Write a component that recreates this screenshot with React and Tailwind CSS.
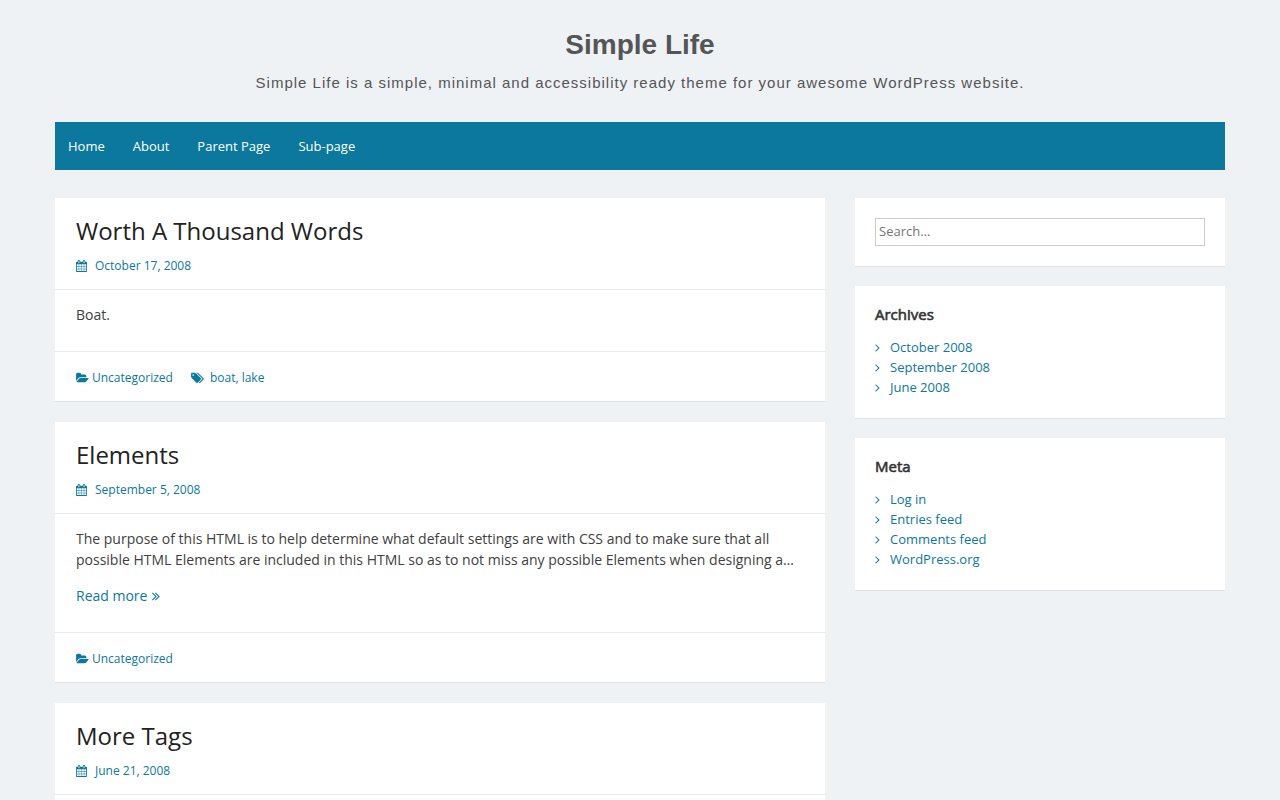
const ICONS = {
  calendar: {
    width: 1664,
    path: "M128 1664h288v-288h-288v288zm352 0h320v-288h-320v288zm-352-352h288v-320h-288v320zm352 0h320v-320h-320v320zm-352-384h288v-288h-288v288zm736 736h320v-288h-320v288zm-384-736h320v-288h-320v288zm768 736h288v-288h-288v288zm-384-352h320v-320h-320v320zm-352-864v-288q0-13-9.500-22.500t-22.500-9.500h-64q-13 0-22.500 9.500t-9.500 22.500v288q0 13 9.500 22.500t22.500 9.500h64q13 0 22.500-9.500t9.500-22.500zm736 864h288v-320h-288v320zm-384-384h320v-288h-320v288zm384 0h288v-288h-288v288zm32-480v-288q0-13-9.500-22.500t-22.500-9.500h-64q-13 0-22.500 9.500t-9.500 22.500v288q0 13 9.500 22.500t22.500 9.500h64q13 0 22.500-9.500t9.500-22.500zm384-64v1280q0 52-38 90t-90 38h-1408q-52 0-90-38t-38-90v-1280q0-52 38-90t90-38h128v-96q0-66 47-113t113-47h64q66 0 113 47t47 113v96h384v-96q0-66 47-113t113-47h64q66 0 113 47t47 113v96h128q52 0 90 38t38 90z",
  },
  folder: {
    width: 1920,
    path: "M1879 952q0 31-31 66l-336 396q-43 51-120.500 86.500t-143.500 35.500h-1088q-34 0-60.500-13t-26.500-43q0-31 31-66l336-396q43-51 120.500-86.500t143.500-35.500h1088q34 0 60.500 13t26.500 43zm-343-344v160h-832q-94 0-197 47.500t-164 119.500l-337 396-5 6q0-4-.5-12.500t-.5-12.500v-960q0-92 66-158t158-66h320q92 0 158 66t66 158v32h544q92 0 158 66t66 158z",
  },
  tags: {
    width: 1920,
    path: "M448 448q0-53-37.500-90.500t-90.500-37.500-90.500 37.500-37.500 90.500 37.500 90.500 90.500 37.500 90.500-37.500 37.500-90.500zm1067 576q0 53-37 90l-491 492q-39 37-91 37-53 0-90-37l-715-716q-38-37-64.500-101t-26.500-117v-416q0-52 38-90t90-38h416q53 0 117 26.500t102 64.500l715 714q37 39 37 91zm384 0q0 53-37 90l-491 492q-39 37-91 37-36 0-59-14t-53-45l470-470q37-37 37-90 0-52-37-91l-715-714q-38-38-102-64.500t-117-26.500h224q53 0 117 26.500t102 64.500l715 714q37 39 37 91z",
  },
  angle: {
    width: 640,
    path: "M595 960q0 13-10 23l-466 466q-10 10-23 10t-23-10l-50-50q-10-10-10-23t10-23l393-393-393-393q-10-10-10-23t10-23l50-50q10-10 23-10t23 10l466 466q10 10 10 23z",
  },
  doubleAngle: {
    width: 1024,
    path: "M595 960q0 13-10 23l-466 466q-10 10-23 10t-23-10l-50-50q-10-10-10-23t10-23l393-393-393-393q-10-10-10-23t10-23l50-50q10-10 23-10t23 10l466 466q10 10 10 23zm384 0q0 13-10 23l-466 466q-10 10-23 10t-23-10l-50-50q-10-10-10-23t10-23l393-393-393-393q-10-10-10-23t10-23l50-50q10-10 23-10t23 10l466 466q10 10 10 23z",
  },
};

const NAV = ["Home", "About", "Parent Page", "Sub-page"];

const POSTS = [
  {
    title: "Worth A Thousand Words",
    date: "October 17, 2008",
    text: "Boat.",
    category: "Uncategorized",
    tags: ["boat", "lake"],
  },
  {
    title: "Elements",
    date: "September 5, 2008",
    text: "The purpose of this HTML is to help determine what default settings are with CSS and to make sure that all possible HTML Elements are included in this HTML so as to not miss any possible Elements when designing a…",
    more: true,
    category: "Uncategorized",
    tags: [],
  },
  {
    title: "More Tags",
    date: "June 21, 2008",
    tags: [],
  },
];

const WIDGETS = [
  { title: "Archives", links: ["October 2008", "September 2008", "June 2008"] },
  { title: "Meta", links: ["Log in", "Entries feed", "Comments feed", "WordPress.org"] },
];

function Icon({ name, className }) {
  const { width, path } = ICONS[name];
  return (
    <svg viewBox={`0 0 ${width} 1792`} className={`shrink-0 fill-current ${className}`} aria-hidden="true">
      <path d={path} />
    </svg>
  );
}

function Post({ post }) {
  return (
    <article className="border-b border-[#dfe3e6] bg-white">
      <header className="border-b border-[#e9ebec] px-[21px] pt-[17px] pb-3">
        <h2 className="text-2xl leading-8 text-[#222222]">
          <a href="#">{post.title}</a>
        </h2>
        <a href="#" className="mt-2 flex h-[22px] items-center gap-2 text-xs text-[#0c789d]">
          <Icon name="calendar" className="h-3 w-[11px]" />
          <time>{post.date}</time>
        </a>
      </header>

      <div className="px-[21px] pt-[14px] pb-[26px] text-sm leading-[21px] text-[#404040]">
        {post.text && <p>{post.text}</p>}
        {post.more && (
          <a href="#" className="mt-[15px] flex items-center gap-[5px] text-[#0c789d]">
            Read more
            <Icon name="doubleAngle" className="h-[14px] w-2" />
          </a>
        )}
      </div>

      {post.category && (
        <footer className="flex h-[50px] items-center gap-[18px] border-t border-[#e9ebec] px-[21px] pt-[2px] text-xs text-[#0c789d]">
          <a href="#" className="flex items-center gap-[3px]">
            <Icon name="folder" className="h-3 w-[13px]" />
            {post.category}
          </a>
          {post.tags.length > 0 && (
            <div className="flex items-center gap-[6px]">
              <Icon name="tags" className="h-3 w-[13px]" />
              <span>
                {post.tags.map((tag, i) => (
                  <span key={tag}>
                    {i > 0 && ", "}
                    <a href="#">{tag}</a>
                  </span>
                ))}
              </span>
            </div>
          )}
        </footer>
      )}
    </article>
  );
}

function Widget({ title, links }) {
  return (
    <section className="border-b border-[#dfe3e6] bg-white px-5 pt-[19px] pb-[21px]">
      <h3 className="text-[15px] leading-[18px] font-normal text-[#333333] [-webkit-text-stroke:0.04em]">{title}</h3>
      <ul className="mt-[14px] text-[13px] leading-5 text-[#0c789d]">
        {links.map((link) => (
          <li key={link}>
            <a href="#" className="flex items-center gap-[10px]">
              <Icon name="angle" className="h-[13px] w-[5px]" />
              {link}
            </a>
          </li>
        ))}
      </ul>
    </section>
  );
}

export default function App() {
  return (
    <div className="min-h-screen bg-[#eef2f5] px-4 pb-10 font-['Open_Sans',sans-serif]">
      <div className="mx-auto max-w-[1170px]">
        <header className="pt-[29px] pb-7 text-center font-['Liberation_Sans',sans-serif] text-[#555555]">
          <h1 className="text-[28px] leading-8 font-bold">
            <a href="#">Simple Life</a>
          </h1>
          <p className="mt-[11px] text-[15px] leading-[22px] tracking-[1px]">
            Simple Life is a simple, minimal and accessibility ready theme for your awesome WordPress website.
          </p>
        </header>

        <nav className="bg-[#0c789d]">
          <ul className="flex gap-[2px] text-[13px] leading-5 text-white">
            {NAV.map((item) => (
              <li key={item}>
                <a href="#" className="block px-[13px] py-[14px]">
                  {item}
                </a>
              </li>
            ))}
          </ul>
        </nav>

        <div className="mt-7 grid items-start gap-[30px] md:grid-cols-[minmax(0,77fr)_minmax(0,37fr)]">
          <main className="flex flex-col gap-5">
            {POSTS.map((post) => (
              <Post key={post.title} post={post} />
            ))}
          </main>

          <aside className="flex flex-col gap-[19px]">
            <form className="border-b border-[#dfe3e6] bg-white p-5" role="search">
              <input
                type="search"
                aria-label="Search"
                placeholder="Search…"
                className="block h-7 w-full border border-[#cccccc] px-[3px] pb-[2px] text-[13px] text-[#333333] placeholder:text-[#757575]"
              />
            </form>
            {WIDGETS.map((widget) => (
              <Widget key={widget.title} title={widget.title} links={widget.links} />
            ))}
          </aside>
        </div>
      </div>
    </div>
  );
}
